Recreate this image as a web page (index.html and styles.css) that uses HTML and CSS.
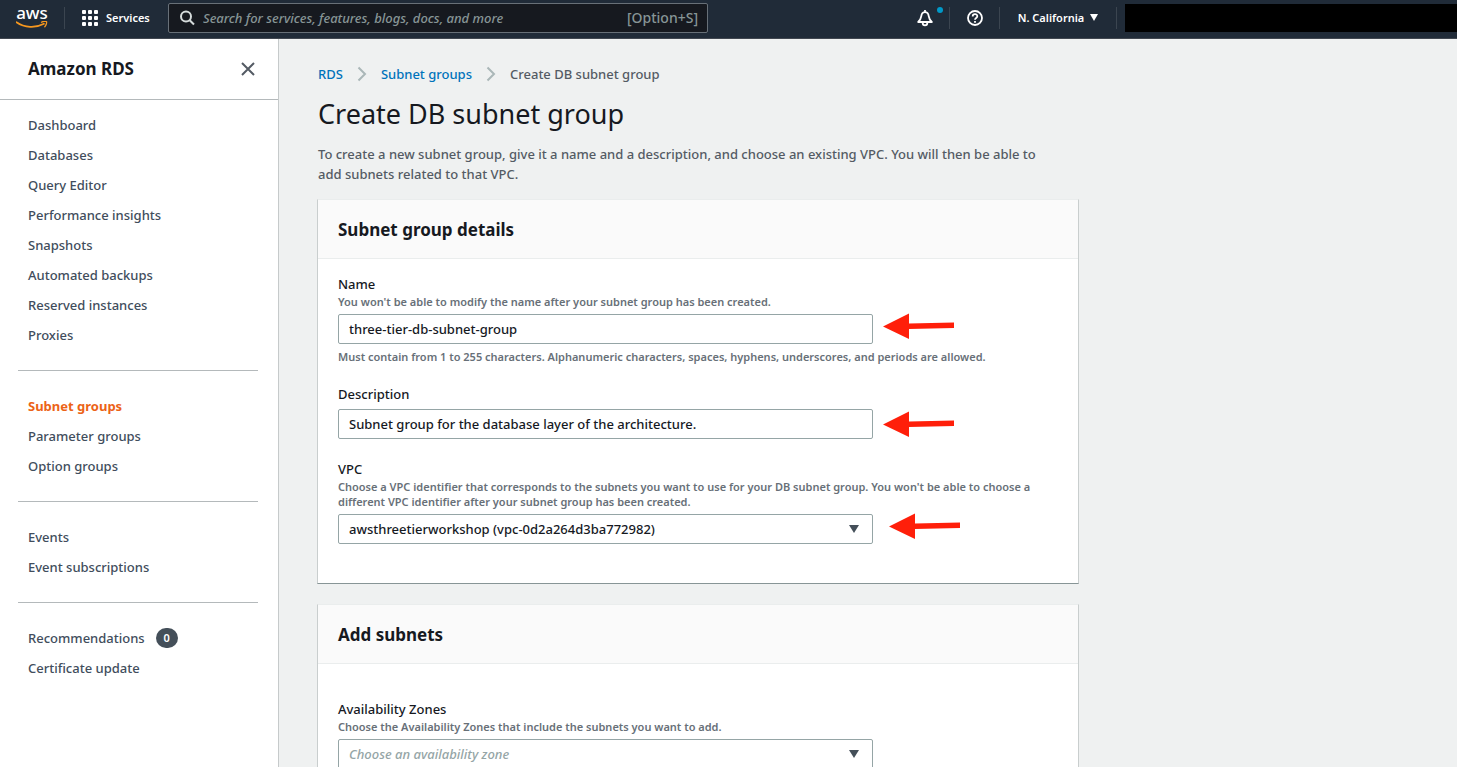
FILE: index.html
```html
<!DOCTYPE html>
<html lang="en">
<head>
<meta charset="utf-8">
<title>Create DB subnet group</title>
<link rel="stylesheet" href="styles.css">
</head>
<body>
<header class="topbar">
  <a class="logo" href="#" aria-label="AWS home">
    <span class="logo-text">aws</span>
    <svg class="logo-smile" viewBox="0 0 32 8" aria-hidden="true"><path d="M.5 1.2C8.500 6.800 19.500 7.400 28 2.800" fill="none" stroke="#f7981f" stroke-width="1.700" stroke-linecap="round"/><path d="M25.500 1.200c2-1.200 4.500-1.100 5-.5.400.6-.1 3.300-1.700 5" fill="none" stroke="#f7981f" stroke-width="1.300" stroke-linecap="round"/></svg>
  </a>
  <button class="services" type="button">
    <svg width="16" height="16" viewBox="0 0 16 16" fill="#fff" aria-hidden="true"><rect width="4" height="4" rx="1"/><rect x="6" width="4" height="4" rx="1"/><rect x="12" width="4" height="4" rx="1"/><rect y="6" width="4" height="4" rx="1"/><rect x="6" y="6" width="4" height="4" rx="1"/><rect x="12" y="6" width="4" height="4" rx="1"/><rect y="12" width="4" height="4" rx="1"/><rect x="6" y="12" width="4" height="4" rx="1"/><rect x="12" y="12" width="4" height="4" rx="1"/></svg>
    <span>Services</span>
  </button>
  <label class="search">
    <svg width="15" height="16" viewBox="0 0 15 16" fill="none" stroke="#d5dbdb" stroke-width="2" aria-hidden="true"><circle cx="6" cy="6.500" r="5"/><path d="M9.700 10.200 14 14.500"/></svg>
    <input type="search" aria-label="Search" placeholder="Search for services, features, blogs, docs, and more">
    <span class="shortcut">[Option+S]</span>
  </label>
  <div class="tools">
    <button class="tool bell" type="button" aria-label="Notifications">
      <svg width="16" height="18" viewBox="0 0 16 18" fill="none" stroke="#fff" stroke-width="1.800" stroke-linejoin="round" aria-hidden="true"><path d="M8 1v2M1.200 13C3.400 10.800 4 9.500 4.300 7.200 4.600 4.500 6 3.200 8 3.200s3.400 1.300 3.700 4c.3 2.300.9 3.600 3.100 5.800zM5.700 13.200v.8a2.300 2.300 0 0 0 4.600 0v-.8"/></svg>
      <span class="dot"></span>
    </button>
    <button class="tool" type="button" aria-label="Help">
      <svg width="16" height="16" viewBox="0 0 16 16" fill="none" stroke="#fff" stroke-width="1.800" aria-hidden="true"><circle cx="8" cy="8" r="7"/><path d="M5.700 6.400C5.700 3.400 10.300 3.400 10.300 6.200 10.300 8 8 7.900 8 9.800M8 10.900v1.800"/></svg>
    </button>
    <button class="region" type="button">
      <span>N. California</span>
      <svg width="8" height="7" viewBox="0 0 8 7" aria-hidden="true"><path d="M0 0h8L4 7z" fill="#fff"/></svg>
    </button>
  </div>
  <div class="account"></div>
</header>

<div class="shell">
  <nav class="sidebar" aria-label="Amazon RDS">
    <div class="side-head">
      <h2>Amazon RDS</h2>
      <button class="close" type="button" aria-label="Close navigation">
        <svg width="14" height="14" viewBox="0 0 14 14" stroke="#545b64" stroke-width="2" aria-hidden="true"><path d="M1 1l12 12M13 1L1 13"/></svg>
      </button>
    </div>
    <div class="side-body">
      <ul>
        <li><a href="#">Dashboard</a></li>
        <li><a href="#">Databases</a></li>
        <li><a href="#">Query Editor</a></li>
        <li><a href="#">Performance insights</a></li>
        <li><a href="#">Snapshots</a></li>
        <li><a href="#">Automated backups</a></li>
        <li><a href="#">Reserved instances</a></li>
        <li><a href="#">Proxies</a></li>
      </ul>
      <ul>
        <li><a class="active" href="#">Subnet groups</a></li>
        <li><a href="#">Parameter groups</a></li>
        <li><a href="#">Option groups</a></li>
      </ul>
      <ul>
        <li><a href="#">Events</a></li>
        <li><a href="#">Event subscriptions</a></li>
      </ul>
      <ul>
        <li><a href="#">Recommendations</a><span class="badge">0</span></li>
        <li><a href="#">Certificate update</a></li>
      </ul>
    </div>
  </nav>

  <main class="content">
    <nav class="crumbs" aria-label="Breadcrumb">
      <a href="#">RDS</a>
      <svg width="10" height="16" viewBox="0 0 10 16" aria-hidden="true"><path d="M1.500 1.500 8 8l-6.500 6.500"/></svg>
      <a href="#">Subnet groups</a>
      <svg width="10" height="16" viewBox="0 0 10 16" aria-hidden="true"><path d="M1.500 1.500 8 8l-6.500 6.500"/></svg>
      <span>Create DB subnet group</span>
    </nav>
    <h1>Create DB subnet group</h1>
    <p class="intro">To create a new subnet group, give it a name and a description, and choose an existing VPC. You will then be able to add subnets related to that VPC.</p>

    <section class="panel">
      <h2 class="panel-head">Subnet group details</h2>
      <div class="panel-body">
        <div class="field">
          <label for="name">Name</label>
          <p class="hint">You won't be able to modify the name after your subnet group has been created.</p>
          <div class="control">
            <input id="name" type="text" value="three-tier-db-subnet-group">
            <svg class="arrow raised" viewBox="0 0 72 26" aria-hidden="true"><path d="M0 13.500 26 .5v10L71 9.500v5.500L26 16v10z"/></svg>
          </div>
          <p class="hint">Must contain from 1 to 255 characters. Alphanumeric characters, spaces, hyphens, underscores, and periods are allowed.</p>
        </div>
        <div class="field">
          <label for="description">Description</label>
          <div class="control">
            <input id="description" type="text" value="Subnet group for the database layer of the architecture.">
            <svg class="arrow" viewBox="0 0 72 26" aria-hidden="true"><path d="M0 13.500 26 .5v10L71 9.500v5.500L26 16v10z"/></svg>
          </div>
        </div>
        <div class="field">
          <label for="vpc">VPC</label>
          <p class="hint">Choose a VPC identifier that corresponds to the subnets you want to use for your DB subnet group. You won't be able to choose a different VPC identifier after your subnet group has been created.</p>
          <div class="control wide-gap">
            <div class="select">
              <select id="vpc"><option>awsthreetierworkshop (vpc-0d2a264d3ba772982)</option></select>
              <svg class="caret" width="10" height="8" viewBox="0 0 10 8" aria-hidden="true"><path d="M0 0h10L5 8z"/></svg>
            </div>
            <svg class="arrow raised" viewBox="0 0 72 26" aria-hidden="true"><path d="M0 13.500 26 .5v10L71 9.500v5.500L26 16v10z"/></svg>
          </div>
        </div>
      </div>
    </section>

    <section class="panel">
      <h2 class="panel-head">Add subnets</h2>
      <div class="panel-body spaced">
        <div class="field">
          <label for="zones">Availability Zones</label>
          <p class="hint">Choose the Availability Zones that include the subnets you want to add.</p>
          <div class="control">
            <div class="select">
              <select id="zones" class="empty"><option>Choose an availability zone</option></select>
              <svg class="caret" width="10" height="8" viewBox="0 0 10 8" aria-hidden="true"><path d="M0 0h10L5 8z"/></svg>
            </div>
          </div>
        </div>
      </div>
    </section>
  </main>
</div>
</body>
</html>
```
FILE: styles.css
```css
* {
  box-sizing: border-box;
}

body {
  margin: 0;
  height: 100vh;
  display: flex;
  flex-direction: column;
  overflow: hidden;
  background: #eff1f1;
  color: #16191f;
  font: 500 13px/20px "Noto Sans", "Open Sans", sans-serif;
}

h1, h2, p, ul {
  margin: 0;
  padding: 0;
}

button {
  padding: 0;
  border: 0;
  background: none;
  color: inherit;
  font: inherit;
}

a {
  color: inherit;
  text-decoration: none;
}

svg {
  display: block;
  flex: none;
}

/* Top bar */
.topbar {
  flex: none;
  height: 39px;
  display: flex;
  align-items: center;
  padding-bottom: 3px;
  border-bottom: 1px solid #414750;
  background: #202b38;
  color: #fff;
}

.logo {
  width: 65px;
  height: 22px;
  padding-left: 16px;
  border-right: 1px solid #3b4550;
}

.logo-text {
  display: block;
  width: 32px;
  height: 14px;
  line-height: 11px;
  font-size: 17px;
  text-align: center;
}

.logo-smile {
  width: 32px;
  height: 8px;
}

.services {
  display: flex;
  align-items: center;
  gap: 8px;
  width: 103px;
  padding-left: 17px;
  font-size: 11px;
  font-weight: 600;
}

.search {
  flex: 0 1 540px;
  height: 30px;
  display: flex;
  align-items: center;
  padding: 0 9px 0 11px;
  border: 1px solid #687078;
  border-radius: 2px;
  background: #16191f;
  color: #879596;
}

.search input {
  flex: 1;
  min-width: 0;
  margin-left: 8px;
  padding: 0;
  border: 0;
  outline: 0;
  background: none;
  color: #fff;
  font: inherit;
}

.search input::placeholder {
  color: #879596;
  font-style: italic;
}

.shortcut {
  font-size: 14px;
}

.tools {
  display: flex;
  margin-left: auto;
}

.tool {
  position: relative;
  display: flex;
  align-items: center;
  justify-content: center;
  width: 50px;
  height: 22px;
  border-right: 1px solid #3b4550;
}

.dot {
  position: absolute;
  top: 0;
  right: 6px;
  width: 6px;
  height: 6px;
  border-radius: 50%;
  background: #0099c8;
}

.region {
  display: flex;
  align-items: center;
  justify-content: center;
  gap: 6px;
  width: 117px;
  height: 22px;
  border-right: 1px solid #3b4550;
  font-size: 11px;
  font-weight: 600;
}

.account {
  width: 332px;
  height: 28px;
  margin-left: 8px;
  background: #000;
}

/* Side navigation */
.shell {
  flex: 1;
  min-height: 0;
  display: flex;
}

.sidebar {
  flex: none;
  width: 279px;
  border-right: 1px solid #c6cacb;
  background: #fff;
  color: #414d5c;
}

.side-head {
  display: flex;
  align-items: center;
  justify-content: space-between;
  height: 61px;
  padding: 0 23px 0 28px;
  border-bottom: 1px solid #b4b9bb;
}

.side-head h2 {
  color: #16191f;
  font-size: 17px;
  font-weight: 700;
}

.side-body {
  padding: 10px 20px 0 18px;
}

.side-body ul {
  list-style: none;
}

.side-body ul + ul {
  margin-top: 20px;
  padding-top: 20px;
  border-top: 1px solid #b4b9bb;
}

.side-body li {
  display: flex;
  align-items: center;
  height: 30px;
  padding-left: 10px;
}

.side-body .active {
  color: #ec6317;
  font-weight: 700;
}

.badge {
  width: 22px;
  height: 20px;
  margin-left: 11px;
  border-radius: 10px;
  background: #444f59;
  color: #fff;
  font-size: 11px;
  font-weight: 600;
  text-align: center;
}

/* Main column */
.content {
  flex: 1;
  min-width: 0;
  max-width: 840px;
  padding: 25px 40px 0 39px;
}

.crumbs {
  display: flex;
  align-items: center;
  gap: 14px;
  color: #545b64;
}

.crumbs a {
  color: #0073bb;
}

.crumbs path {
  fill: none;
  stroke: #aab7b8;
  stroke-width: 2;
}

h1 {
  margin-top: 12px;
  font-size: 27px;
  font-weight: 400;
  line-height: 36px;
}

.intro {
  margin: 12px 0 15px;
  padding-right: 20px;
  color: #545b64;
}

.panel {
  margin: 0 0 20px -1px;
  border: 1px solid #c9cece;
  border-top-color: #eaeded;
  border-bottom-color: #879596;
  background: #fff;
}

.panel-head {
  padding: 20px 20px 18px;
  border-bottom: 1px solid #eaeded;
  background: #fafafa;
  font-size: 17px;
  font-weight: 700;
}

.panel-body {
  display: grid;
  gap: 20px;
  padding: 15px 20px 39px;
}

.panel-body.spaced {
  padding-top: 35px;
}

.field label {
  display: block;
}

.hint {
  color: #687078;
  font-size: 11px;
  font-weight: 600;
  line-height: 15px;
}

.control {
  display: flex;
  align-items: center;
  gap: 10px;
  margin-top: 5px;
}

.control.wide-gap {
  gap: 16px;
}

.control + .hint {
  margin-top: 5px;
}

.control input,
.select {
  flex: 0 1 535px;
  min-width: 0;
  height: 30px;
}

.control input,
.select select {
  padding: 0 10px;
  border: 1px solid #95a5a6;
  border-radius: 2px;
  background: #fff;
  color: #16191f;
  font: inherit;
}

.select {
  position: relative;
}

.select select {
  width: 100%;
  height: 100%;
  appearance: none;
}

.select .empty {
  color: #95a5a6;
  font-style: italic;
}

.caret {
  position: absolute;
  top: 11px;
  right: 14px;
  fill: #444f59;
  pointer-events: none;
}

.arrow {
  width: 72px;
  height: 26px;
  fill: #ff1f0a;
}

.arrow.raised {
  margin: -3px 0 3px;
}
```
